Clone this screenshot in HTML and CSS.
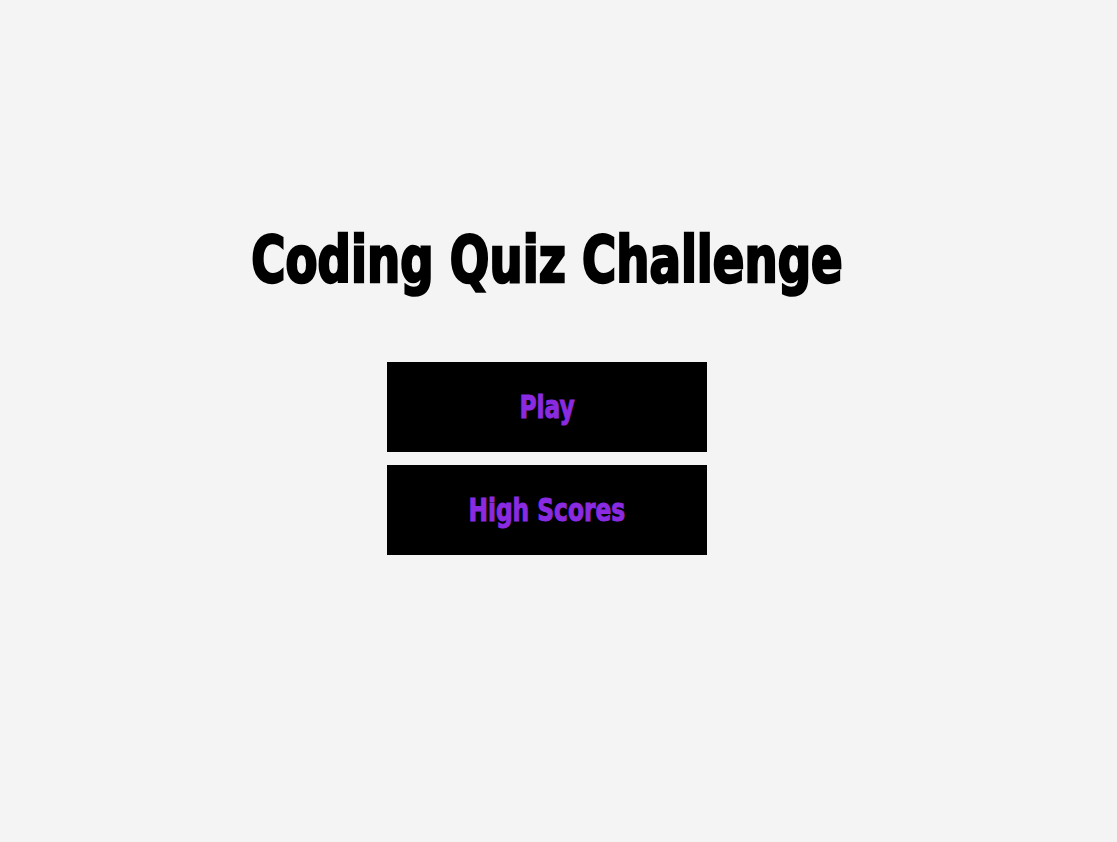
FILE: index.html
```html
<!DOCTYPE html>
<html lang="en">
<head>
<meta charset="utf-8">
<title>Coding Quiz Challenge</title>
<link rel="stylesheet" href="styles.css">
</head>
<body>
<main class="home">
  <h1 class="title">Coding Quiz Challenge</h1>
  <div class="menu">
    <button class="menu-btn" type="button"><span class="label">Play</span></button>
    <button class="menu-btn" type="button"><span class="label">High Scores</span></button>
  </div>
</main>
</body>
</html>
```

FILE: styles.css
```css
html, body {
  margin: 0;
  padding: 0;
  background: #f4f4f4;
}
body {
  font-family: Impact, "Liberation Sans Narrow", "DejaVu Sans Condensed", "Liberation Sans", sans-serif;
}
.home {
  display: flex;
  flex-direction: column;
  align-items: center;
  padding-top: 220px;
  padding-right: 23px;
}
.title {
  margin: 0;
  font-size: 64px;
  font-weight: 700;
  line-height: 80px;
  color: #000;
  -webkit-text-stroke: 2.5px #000;
  transform: scaleX(0.81);
}
.menu {
  display: flex;
  flex-direction: column;
  gap: 13px;
  margin-top: 62px;
}
.menu-btn {
  width: 320px;
  height: 90px;
  border: none;
  background: #000;
  color: #8a2be2;
  font-family: inherit;
  font-size: 32px;
  font-weight: 700;
  cursor: pointer;
  padding: 0;
}
.label {
  display: inline-block;
  -webkit-text-stroke: 1px #8a2be2;
  transform: scaleX(0.81);
}
```
